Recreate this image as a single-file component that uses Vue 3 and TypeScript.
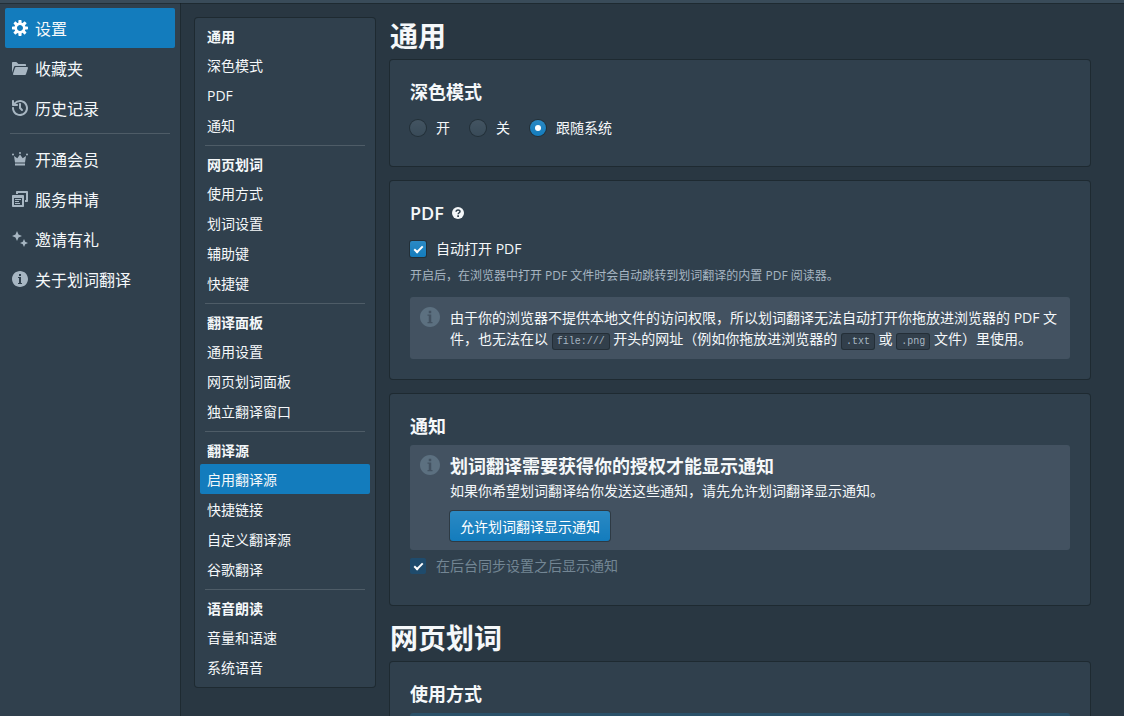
<script setup lang="ts">
import { ref } from 'vue'

interface Group {
  title: string
  items: string[]
}

const primary = [
  { label: '设置', icon: 'cog' },
  { label: '收藏夹', icon: 'folder' },
  { label: '历史记录', icon: 'history' },
]
const secondary = [
  { label: '开通会员', icon: 'crown' },
  { label: '服务申请', icon: 'apps' },
  { label: '邀请有礼', icon: 'clean' },
  { label: '关于划词翻译', icon: 'info' },
]
const menus = [primary, secondary]

const icons: Record<string, string> = {
  cog: 'M15.19 6.39h-1.85c-.11-.37-.27-.71-.45-1.04l1.36-1.36c.31-.31.31-.82 0-1.13l-1.13-1.13c-.31-.31-.82-.31-1.13 0l-1.36 1.36c-.33-.17-.67-.33-1.04-.44V.79c0-.44-.36-.8-.8-.8h-1.6c-.44 0-.8.36-.8.8v1.86c-.39.12-.75.28-1.1.47l-1.3-1.3c-.3-.3-.79-.3-1.09 0L1.82 2.91c-.3.3-.3.79 0 1.09l1.3 1.3c-.2.34-.36.7-.48 1.09H.79c-.44 0-.8.36-.8.8v1.6c0 .44.36.8.8.8h1.85c.11.37.27.71.45 1.04l-1.36 1.36c-.31.31-.31.82 0 1.13l1.13 1.13c.31.31.82.31 1.13 0l1.36-1.36c.33.18.67.33 1.04.44v1.86c0 .44.36.8.8.8h1.6c.44 0 .8-.36.8-.8v-1.86c.39-.12.75-.28 1.1-.47l1.3 1.3c.3.3.79.3 1.09 0l1.09-1.09c.3-.3.3-.79 0-1.09l-1.3-1.3c.19-.35.36-.71.48-1.1h1.85c.44 0 .8-.36.8-.8v-1.6a.816.816 0 00-.81-.79zM7.99 10.99c-1.66 0-3-1.34-3-3s1.34-3 3-3 3 1.34 3 3-1.34 3-3 3z',
  folder: 'M2.06 6.69c.14-.4.5-.69.94-.69h11V5c0-.55-.45-1-1-1H6.41l-1.7-1.71A.997.997 0 004 2H1c-.55 0-1 .45-1 1v9.84l2.05-6.15h.01zM16 8c0-.55-.45-1-1-1H4a.99.99 0 00-.94.69l-2 6c-.04.09-.06.2-.06.31 0 .55.45 1 1 1h11c.44 0 .81-.29.94-.69l2-6c.04-.1.06-.2.06-.31z',
  history: 'M8 3c-.55 0-1 .45-1 1v4c0 .28.11.53.29.71l2 2a1.003 1.003 0 001.42-1.42L9 7.59V4c0-.55-.45-1-1-1zm0-3a7.95 7.95 0 00-6 2.74V1c0-.55-.45-1-1-1s-1 .45-1 1v4c0 .55.45 1 1 1h4c.55 0 1-.45 1-1s-.45-1-1-1H3.54C4.64 2.78 6.23 2 8 2c3.31 0 6 2.69 6 6 0 2.61-1.67 4.81-4 5.63v-.01c-.63.23-1.29.38-2 .38-3.31 0-6-2.69-6-6 0-.55-.45-1-1-1s-1 .45-1 1c0 4.42 3.58 8 8 8 .34 0 .67-.03 1-.07.02 0 .04-.01.06-.01C12.98 15.4 16 12.06 16 8c0-4.42-3.58-8-8-8z',
  crown: 'M2 5l3.300 2.200L8 3.500l2.700 3.700L14 5l-1 6.500H3zM3 12.500h10v2H3zM8 1a1 1 0 100 2 1 1 0 000-2zM1 2.500a1 1 0 100 2 1 1 0 000-2zM15 2.500a1 1 0 100 2 1 1 0 000-2z',
  apps: 'M5 0h10c.55 0 1 .45 1 1v9c0 .55-.45 1-1 1h-2V9h1V2H6v1H4V1c0-.55.45-1 1-1zM1 4h10c.55 0 1 .45 1 1v10c0 .55-.45 1-1 1H1c-.55 0-1-.45-1-1V5c0-.55.45-1 1-1zm1 3v7h8V7zM3 8h6v1H3zM3 10h4v1H3zM3 12h5v1H3z',
  clean: 'M5 0l1.500 3.500L10 5 6.500 6.500 5 10 3.500 6.500 0 5l3.500-1.500zM12 8l1.200 2.800L16 12l-2.800 1.200L12 16l-1.200-2.800L8 12l2.800-1.200z',
  info: 'M8 0C3.58 0 0 3.58 0 8s3.58 8 8 8 8-3.58 8-8-3.58-8-8-8zM7 3h2v2H7V3zm3 10H6v-1h1V7H6V6h3v6h1v1z',
}

const groups: Group[] = [
  { title: '通用', items: ['深色模式', 'PDF', '通知'] },
  { title: '网页划词', items: ['使用方式', '划词设置', '辅助键', '快捷键'] },
  { title: '翻译面板', items: ['通用设置', '网页划词面板', '独立翻译窗口'] },
  { title: '翻译源', items: ['启用翻译源', '快捷链接', '自定义翻译源', '谷歌翻译'] },
  { title: '语音朗读', items: ['音量和语速', '系统语音'] },
]

const activePage = ref('设置')
const activeSection = ref('启用翻译源')
const darkMode = ref('跟随系统')
const modes = ['开', '关', '跟随系统']
const openPdf = ref(true)
const notifySync = ref(true)
</script>

<template>
  <div class="app">
    <header class="topbar"></header>
    <div class="body">
      <nav class="sidebar" aria-label="主菜单">
        <ul v-for="(menu, i) in menus" :key="i" class="menu">
          <li v-for="m in menu" :key="m.label">
            <a href="#" class="main-link" :class="{ active: m.label === activePage }" @click.prevent="activePage = m.label">
              <svg width="16" height="16" viewBox="0 0 16 16" aria-hidden="true">
                <path fill-rule="evenodd" :d="icons[m.icon]" />
              </svg>
              <span>{{ m.label }}</span>
            </a>
          </li>
        </ul>
      </nav>

      <div class="content">
        <nav class="toc" aria-label="设置目录">
          <section v-for="g in groups" :key="g.title" class="toc-group">
            <h6>{{ g.title }}</h6>
            <a
              v-for="item in g.items"
              :key="item"
              href="#"
              class="toc-link"
              :class="{ active: item === activeSection }"
              @click.prevent="activeSection = item"
            >{{ item }}</a>
          </section>
        </nav>

        <main class="main">
          <h2>通用</h2>
          <section class="card">
            <h5 id="dark-title">深色模式</h5>
            <div class="radios" role="radiogroup" aria-labelledby="dark-title">
              <label v-for="m in modes" :key="m" class="control">
                <input v-model="darkMode" type="radio" name="dark" :value="m" />
                <span>{{ m }}</span>
              </label>
            </div>
          </section>

          <section class="card">
            <h5 class="with-help">
              PDF
              <svg width="12" height="12" viewBox="0 0 16 16" aria-hidden="true">
                <circle cx="8" cy="8" r="8" fill="#f5f8fa" />
                <path d="M5.500 6.200C5.500 3.200 10.700 3.200 10.700 6c0 1.600-2.500 1.800-2.500 3.700" fill="none" stroke="#30404d" stroke-width="2" />
                <path d="M7 11h2.300v2.200H7z" fill="#30404d" />
              </svg>
            </h5>
            <label class="control pdf-check">
              <input v-model="openPdf" type="checkbox" />
              <span>自动打开 PDF</span>
            </label>
            <p class="helper">开启后，在浏览器中打开 PDF 文件时会自动跳转到划词翻译的内置 PDF 阅读器。</p>
            <div class="callout">
              <svg class="callout-icon" width="20" height="20" viewBox="0 0 16 16" aria-hidden="true">
                <path fill-rule="evenodd" :d="icons.info" />
              </svg>
              <p>由于你的浏览器不提供本地文件的访问权限，所以划词翻译无法自动打开你拖放进浏览器的 PDF 文件，也无法在以 <code>file:///</code> 开头的网址（例如你拖放进浏览器的 <code>.txt</code> 或 <code>.png</code> 文件）里使用。</p>
            </div>
          </section>

          <section class="card">
            <h5>通知</h5>
            <div class="callout notice">
              <svg class="callout-icon" width="20" height="20" viewBox="0 0 16 16" aria-hidden="true">
                <path fill-rule="evenodd" :d="icons.info" />
              </svg>
              <div>
                <h4>划词翻译需要获得你的授权才能显示通知</h4>
                <p>如果你希望划词翻译给你发送这些通知，请先允许划词翻译显示通知。</p>
                <button type="button" class="primary">允许划词翻译显示通知</button>
              </div>
            </div>
            <label class="control sync-check">
              <input v-model="notifySync" type="checkbox" disabled />
              <span>在后台同步设置之后显示通知</span>
            </label>
          </section>

          <h2>网页划词</h2>
          <section class="card">
            <h5>使用方式</h5>
            <div class="callout info"></div>
          </section>
        </main>
      </div>
    </div>
  </div>
</template>

<style>
body {
  margin: 0;
  background: #293742;
}
</style>

<style scoped>
.app {
  display: flex;
  flex-direction: column;
  height: 100vh;
  overflow: hidden;
  background: #293742;
  color: #f5f8fa;
  font-family: "Open Sans", "Noto Sans CJK SC", sans-serif;
  font-size: 14px;
  line-height: 18px;
}
.app *,
.app *::after {
  box-sizing: border-box;
}
h2, h4, h5, h6, p, ul {
  margin: 0;
  padding: 0;
}
a {
  color: inherit;
  text-decoration: none;
}
.topbar {
  flex: none;
  height: 3px;
  background: #394b59;
  box-shadow: 0 0 0 1px rgba(16, 22, 26, 0.4);
  z-index: 1;
}
.body {
  flex: 1;
  display: flex;
  min-height: 0;
}
.sidebar {
  flex: none;
  width: 180px;
  padding: 5px;
  background: #30404d;
  box-shadow: 0 0 0 1px rgba(16, 22, 26, 0.4);
}
.menu {
  list-style: none;
}
.menu + .menu {
  margin-top: 5px;
}
.menu + .menu::before {
  content: "";
  display: block;
  margin: 0 5px 5px;
  border-top: 1px solid rgba(255, 255, 255, 0.15);
}
.main-link {
  display: flex;
  align-items: center;
  gap: 7px;
  height: 40px;
  padding: 0 7px;
  border-radius: 2px;
  font-size: 16px;
}
.main-link span {
  padding-top: 2px;
}
.main-link svg {
  fill: #a7b6c2;
}
.active {
  background: #137cbd;
}
.main-link.active svg {
  fill: #ffffff;
}
.content {
  flex: 1;
  display: flex;
  align-items: flex-start;
  gap: 15px;
  min-width: 0;
  padding: 15px 34px 0 15px;
}
.toc {
  flex: none;
  width: 180px;
  padding: 5px;
  border-radius: 3px;
  background: #30404d;
  box-shadow: 0 0 0 1px rgba(16, 22, 26, 0.4);
}
.toc-group + .toc-group {
  margin-top: 5px;
}
.toc h6 {
  margin: 0 5px;
  padding: 5px 2px;
  font-size: 14px;
  font-weight: 700;
  line-height: 17px;
}
.toc-group + .toc-group h6 {
  padding-top: 10px;
  border-top: 1px solid rgba(255, 255, 255, 0.15);
}
.toc-link {
  display: block;
  padding: 2px 7px 0;
  border-radius: 2px;
  line-height: 28px;
}
.main {
  flex: 1;
  min-width: 0;
}
h2 {
  padding: 2px 0 8px;
  font-size: 28px;
  font-weight: 700;
  line-height: 32px;
}
.card {
  margin-bottom: 15px;
  padding: 20px;
  border-radius: 3px;
  background: #30404d;
  box-shadow: 0 0 0 1px rgba(16, 22, 26, 0.4);
}
h5 {
  font-size: 18px;
  font-weight: 700;
  line-height: 24px;
}
.with-help {
  display: flex;
  align-items: center;
  gap: 8px;
  font-weight: 600;
}
.radios {
  display: flex;
  gap: 20px;
  padding: 15px 0 9px;
}
.control {
  display: flex;
  align-items: center;
  gap: 10px;
}
.control input {
  appearance: none;
  display: grid;
  place-items: center;
  width: 16px;
  height: 16px;
  margin: 0;
  border-radius: 2px;
  background: #394b59 linear-gradient(rgba(255, 255, 255, 0.05), rgba(255, 255, 255, 0));
  box-shadow: 0 0 0 1px rgba(16, 22, 26, 0.4);
}
.control input[type="radio"] {
  border-radius: 50%;
}
.control input:checked {
  background: #137cbd linear-gradient(rgba(255, 255, 255, 0.1), rgba(255, 255, 255, 0));
}
.control input[type="radio"]:checked::after {
  content: "";
  width: 6px;
  height: 6px;
  border-radius: 50%;
  background: #ffffff;
}
.control input[type="checkbox"]:checked::after {
  content: "";
  width: 9px;
  height: 5px;
  margin-bottom: 2px;
  border: solid #ffffff;
  border-width: 0 0 2px 2px;
  transform: rotate(-45deg);
}
.control input:checked:disabled {
  background: #1f4b6c;
  box-shadow: none;
}
.control input:disabled + span {
  color: #738694;
}
.pdf-check {
  margin-top: 15px;
}
.helper {
  margin: 9px 0 12px;
  color: #a7b6c2;
  font-size: 12px;
}
.callout {
  display: flex;
  gap: 10px;
  padding: 10px;
  border-radius: 3px;
  background: #435261;
  line-height: 21px;
}
.callout-icon {
  flex: none;
  fill: #5c7080;
}
code {
  padding: 3px 5px;
  border-radius: 3px;
  background: #323f4b;
  box-shadow: inset 0 0 0 1px rgba(16, 22, 26, 0.4);
  color: #a7b6c2;
  font-family: "Liberation Mono", monospace;
  font-size: 10px;
  line-height: 10px;
}
.notice {
  margin: 7px 0;
  padding-bottom: 9px;
}
h4 {
  margin-bottom: 3px;
  font-size: 18px;
  font-weight: 700;
  line-height: 22px;
}
.primary {
  display: block;
  height: 30px;
  margin-top: 10px;
  padding: 0 10px;
  border: 0;
  border-radius: 3px;
  background: #137cbd linear-gradient(rgba(255, 255, 255, 0.1), rgba(255, 255, 255, 0));
  box-shadow: 0 0 0 1px rgba(16, 22, 26, 0.4);
  color: #ffffff;
  font: inherit;
}
.sync-check {
  margin-bottom: 10px;
}
.info {
  margin-top: 7px;
  min-height: 62px;
  background: #2b5169;
}
</style>
